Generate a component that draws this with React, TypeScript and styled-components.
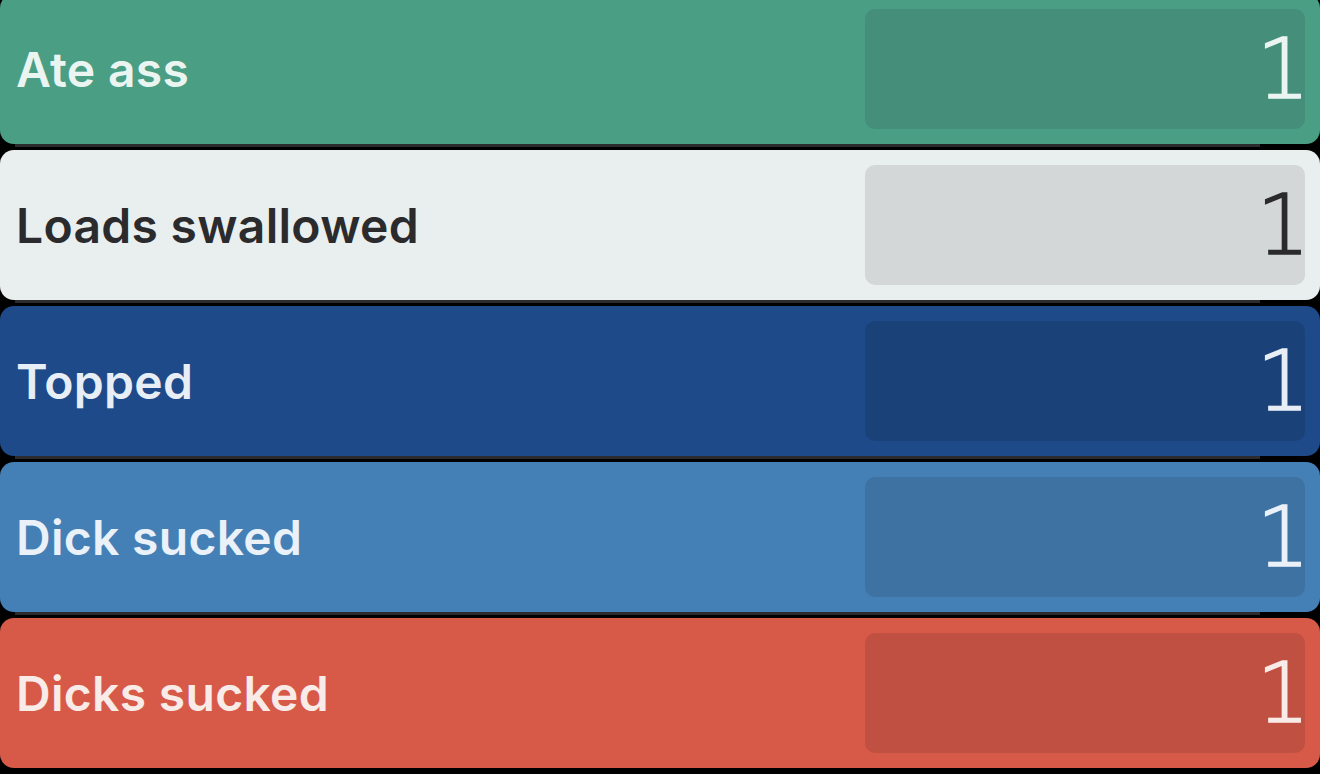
import React from "react";
import styled, { createGlobalStyle } from "styled-components";

const GlobalStyle = createGlobalStyle`
  html, body {
    margin: 0;
    padding: 0;
    background: #000;
  }
  body {
    font-family: Inter, "Noto Sans", "Liberation Sans", sans-serif;
    overflow: hidden;
  }
`;

type Counter = {
  label: string;
  count: number;
  bg: string;
  inner: string;
  text: string;
};

const counters: Counter[] = [
  { label: "Ate ass", count: 1, bg: "#4a9e84", inner: "#448e7a", text: "#eaf5f2" },
  { label: "Loads swallowed", count: 1, bg: "#e9eeef", inner: "#d3d7d8", text: "#2b2b2d" },
  { label: "Topped", count: 1, bg: "#1e4a89", inner: "#1b4278", text: "#e8eef5" },
  { label: "Dick sucked", count: 1, bg: "#4480b6", inner: "#3e72a3", text: "#eaf1f8" },
  { label: "Dicks sucked", count: 1, bg: "#d75a48", inner: "#c05041", text: "#f8ebe8" },
];

const List = styled.div`
  display: flex;
  flex-direction: column;
  gap: 6px;
  margin-top: -6px;
`;

const Row = styled.div<{ $bg: string; $text: string }>`
  position: relative;
  display: flex;
  align-items: center;
  justify-content: space-between;
  height: 150px;
  padding: 15px 15px 15px 16px;
  box-sizing: border-box;
  background: ${(p) => p.$bg};
  color: ${(p) => p.$text};
  border-radius: 14px;

  &::after {
    content: "";
    position: absolute;
    left: 15px;
    right: 60px;
    bottom: -3px;
    height: 3px;
    background: #2c2c2f;
  }
`;

const Label = styled.span`
  font-size: 48px;
  font-weight: 600;
  letter-spacing: 0.3px;
`;

const CountBox = styled.div<{ $bg: string }>`
  display: flex;
  align-items: center;
  justify-content: flex-end;
  width: 440px;
  height: 100%;
  padding-right: 2px;
  box-sizing: border-box;
  background: ${(p) => p.$bg};
  border-radius: 10px;
`;

const Count = styled.span`
  font-family: "DejaVu Sans", Inter, sans-serif;
  font-size: 84px;
  font-weight: 200;
  line-height: 1;
  margin-right: -7px;
  -webkit-text-stroke: 1.6px currentColor;
`;

const App: React.FC = () => {
  return (
    <>
      <GlobalStyle />
      <List>
        {counters.map((c) => (
          <Row key={c.label} $bg={c.bg} $text={c.text}>
            <Label>{c.label}</Label>
            <CountBox $bg={c.inner}>
              <Count>{c.count}</Count>
            </CountBox>
          </Row>
        ))}
      </List>
    </>
  );
};

export default App;
